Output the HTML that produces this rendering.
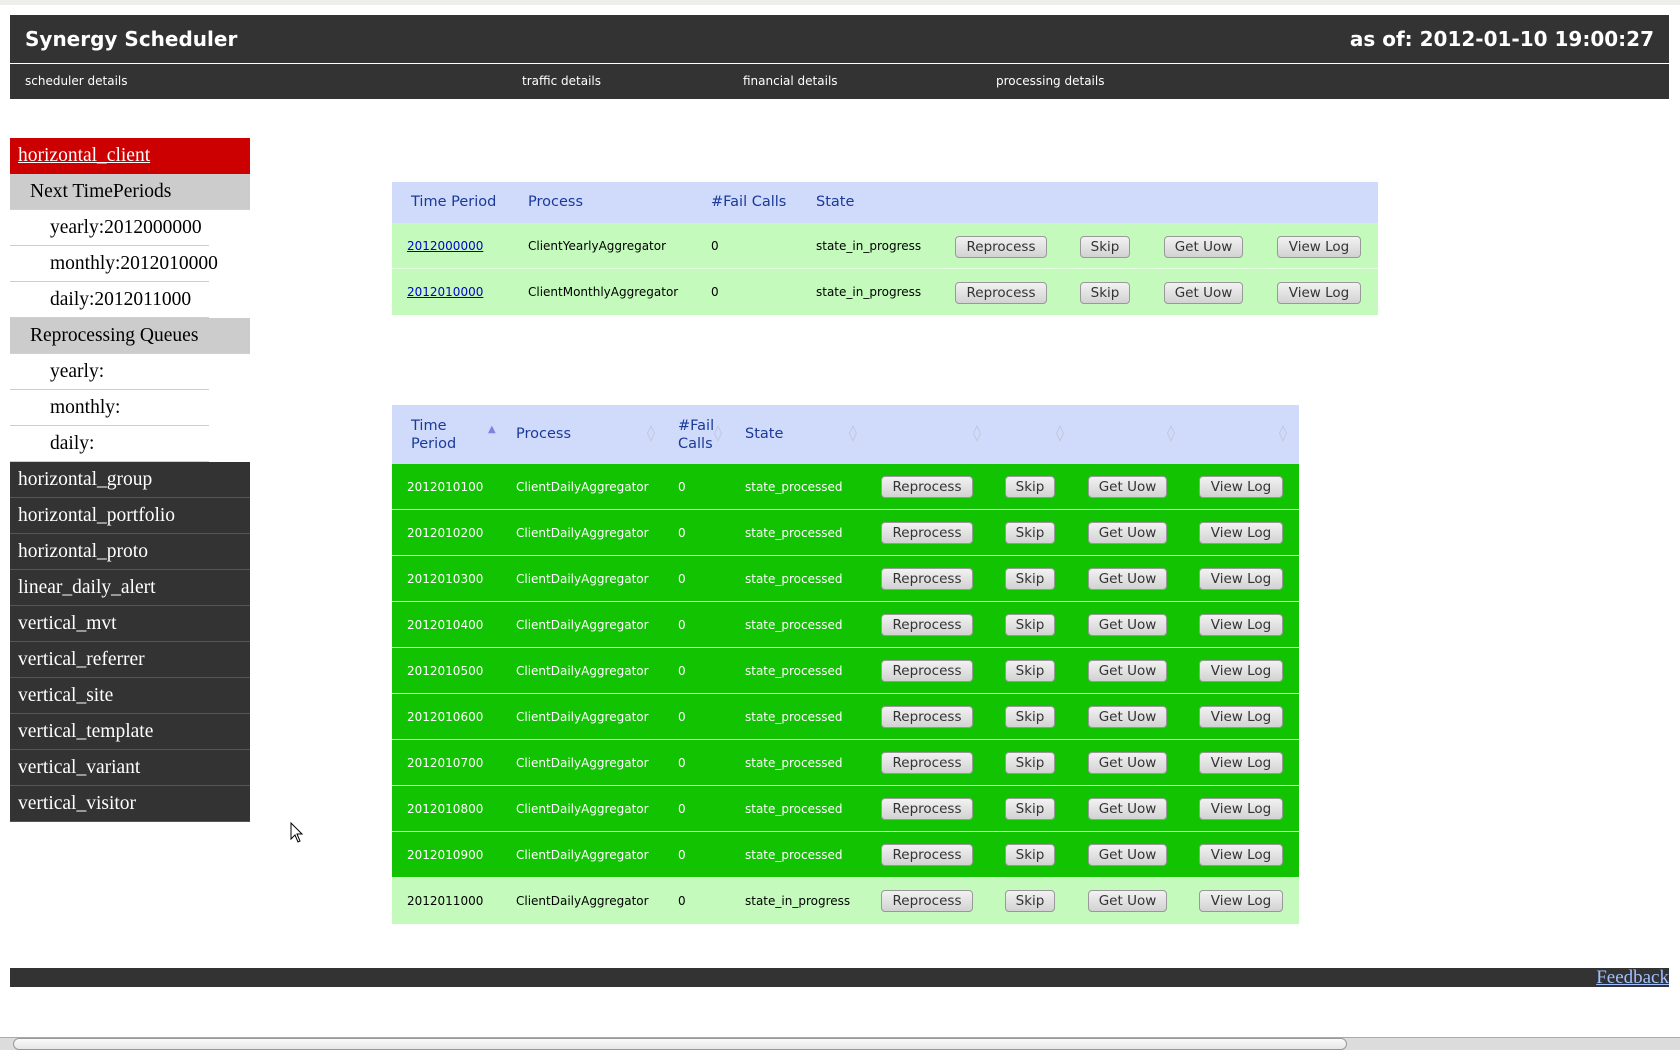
<!DOCTYPE html>
<html><head><meta charset="utf-8"><style>
*{margin:0;padding:0;box-sizing:border-box}
body{width:1680px;height:1050px;overflow:hidden;background:#fff;position:relative;font-family:"DejaVu Sans","Liberation Sans",sans-serif}
.a{position:absolute}
#top{left:0;top:0;width:1680px;height:5px;background:#eeeeea}
#hdr{left:10px;top:15px;width:1659px;height:48px;background:#333;color:#fff;font-weight:bold;font-size:20px}
#nav{left:10px;top:64px;width:1659px;height:35px;background:#333;color:#fff;font-size:12px}
.side{left:10px;width:240px;height:36px;font-family:"Liberation Serif",serif;font-size:19.5px;line-height:35px;white-space:nowrap}
.dk{background:#333;color:#fff;padding-left:8px;border-bottom:1px solid #555}
.gr{background:#ccc;color:#000;padding-left:20px;border-bottom:1px solid #c8d0f0}
.wh{width:199px;background:#fff;color:#000;padding-left:40px;border-bottom:1px solid #c0cdf5;overflow:visible}
.t{font-size:12px;white-space:nowrap}
.h{font-size:14.5px;color:#1a3a9a;white-space:nowrap}
.b{height:22px;border:1px solid #999;border-radius:4px;background:linear-gradient(#f2f2f2,#d2d2d2);font-size:13.5px;color:#333;text-align:center;line-height:20px;font-family:"DejaVu Sans",sans-serif}
.si{color:#bfc6d8;font-size:16px}
</style></head><body>
<div class="a" id="top"></div>
<div class="a" id="hdr"><span class="a" style="left:15px;top:12px">Synergy Scheduler</span><span class="a" style="right:15px;top:12px">as of: 2012-01-10 19:00:27</span></div>
<div class="a" style="left:10px;top:63px;width:1659px;height:1px;background:#fff"></div>
<div class="a" id="nav"><span class="a" style="left:15px;top:10px">scheduler details</span><span class="a" style="left:512px;top:10px">traffic details</span><span class="a" style="left:733px;top:10px">financial details</span><span class="a" style="left:986px;top:10px">processing details</span></div>

<div class="a side" style="top:138px;background:#c00;padding-left:8px"><u style="color:#fff">horizontal_client</u></div>
<div class="a side gr" style="top:174px">Next TimePeriods</div>
<div class="a side wh" style="top:210px">yearly:2012000000</div>
<div class="a side wh" style="top:246px">monthly:2012010000</div>
<div class="a side wh" style="top:282px">daily:2012011000</div>
<div class="a side gr" style="top:318px">Reprocessing Queues</div>
<div class="a side wh" style="top:354px">yearly:</div>
<div class="a side wh" style="top:390px">monthly:</div>
<div class="a side wh" style="top:426px">daily:</div>
<div class="a side dk" style="top:462px">horizontal_group</div>
<div class="a side dk" style="top:498px">horizontal_portfolio</div>
<div class="a side dk" style="top:534px">horizontal_proto</div>
<div class="a side dk" style="top:570px">linear_daily_alert</div>
<div class="a side dk" style="top:606px">vertical_mvt</div>
<div class="a side dk" style="top:642px">vertical_referrer</div>
<div class="a side dk" style="top:678px">vertical_site</div>
<div class="a side dk" style="top:714px">vertical_template</div>
<div class="a side dk" style="top:750px">vertical_variant</div>
<div class="a side dk" style="top:786px">vertical_visitor</div>

<!-- table 1 -->
<div class="a" style="left:392px;top:182px;width:986px;height:41px;background:#d0dafa">
<span class="a h" style="left:19px;top:12px">Time Period</span><span class="a h" style="left:136px;top:12px">Process</span><span class="a h" style="left:319px;top:12px">#Fail Calls</span><span class="a h" style="left:424px;top:12px">State</span></div>
<div class="a" style="left:392px;top:223px;width:986px;height:46px;background:#c4fbbc;border-bottom:1px solid #e4fde0">
<span class="a t" style="left:15px;top:16px;color:#00c;text-decoration:underline">2012000000</span><span class="a t" style="left:136px;top:16px">ClientYearlyAggregator</span><span class="a t" style="left:319px;top:16px">0</span><span class="a t" style="left:424px;top:16px">state_in_progress</span>
<div class="a b" style="left:563px;top:13px;width:92px">Reprocess</div><div class="a b" style="left:688px;top:13px;width:50px">Skip</div><div class="a b" style="left:772px;top:13px;width:79px">Get Uow</div><div class="a b" style="left:885px;top:13px;width:84px">View Log</div></div>
<div class="a" style="left:392px;top:269px;width:986px;height:46px;background:#c4fbbc">
<span class="a t" style="left:15px;top:16px;color:#00c;text-decoration:underline">2012010000</span><span class="a t" style="left:136px;top:16px">ClientMonthlyAggregator</span><span class="a t" style="left:319px;top:16px">0</span><span class="a t" style="left:424px;top:16px">state_in_progress</span>
<div class="a b" style="left:563px;top:13px;width:92px">Reprocess</div><div class="a b" style="left:688px;top:13px;width:50px">Skip</div><div class="a b" style="left:772px;top:13px;width:79px">Get Uow</div><div class="a b" style="left:885px;top:13px;width:84px">View Log</div></div>

<!-- table 2 -->
<div class="a" style="left:392px;top:405px;width:907px;height:59px;background:#d0dafa">
<span class="a h" style="left:19px;top:12px;line-height:18px">Time<br>Period</span><span class="a" style="left:96px;top:19px;color:#8080e0;font-size:10px">▲</span>
<span class="a h" style="left:124px;top:21px">Process</span><span class="a si" style="left:255px;top:18px">◊</span>
<span class="a h" style="left:286px;top:12px;line-height:18px">#Fail<br>Calls</span><span class="a si" style="left:322px;top:18px">◊</span>
<span class="a h" style="left:353px;top:21px">State</span><span class="a si" style="left:457px;top:18px">◊</span>
<span class="a si" style="left:581px;top:18px">◊</span><span class="a si" style="left:664px;top:18px">◊</span><span class="a si" style="left:775px;top:18px">◊</span><span class="a si" style="left:887px;top:18px">◊</span></div>

<div class="a" id="rows" style="left:392px;top:464px;width:907px">
<div style="position:relative;height:46px;background:#11c300;color:#fff;border-bottom:1px solid #e0f5dc"><span class="a t" style="left:15px;top:16px">2012010100</span><span class="a t" style="left:124px;top:16px">ClientDailyAggregator</span><span class="a t" style="left:286px;top:16px">0</span><span class="a t" style="left:353px;top:16px">state_processed</span><div class="a b" style="left:489px;top:12px;width:92px">Reprocess</div><div class="a b" style="left:613px;top:12px;width:50px">Skip</div><div class="a b" style="left:696px;top:12px;width:79px">Get Uow</div><div class="a b" style="left:807px;top:12px;width:84px">View Log</div></div>
<div style="position:relative;height:46px;background:#11c300;color:#fff;border-bottom:1px solid #e0f5dc"><span class="a t" style="left:15px;top:16px">2012010200</span><span class="a t" style="left:124px;top:16px">ClientDailyAggregator</span><span class="a t" style="left:286px;top:16px">0</span><span class="a t" style="left:353px;top:16px">state_processed</span><div class="a b" style="left:489px;top:12px;width:92px">Reprocess</div><div class="a b" style="left:613px;top:12px;width:50px">Skip</div><div class="a b" style="left:696px;top:12px;width:79px">Get Uow</div><div class="a b" style="left:807px;top:12px;width:84px">View Log</div></div>
<div style="position:relative;height:46px;background:#11c300;color:#fff;border-bottom:1px solid #e0f5dc"><span class="a t" style="left:15px;top:16px">2012010300</span><span class="a t" style="left:124px;top:16px">ClientDailyAggregator</span><span class="a t" style="left:286px;top:16px">0</span><span class="a t" style="left:353px;top:16px">state_processed</span><div class="a b" style="left:489px;top:12px;width:92px">Reprocess</div><div class="a b" style="left:613px;top:12px;width:50px">Skip</div><div class="a b" style="left:696px;top:12px;width:79px">Get Uow</div><div class="a b" style="left:807px;top:12px;width:84px">View Log</div></div>
<div style="position:relative;height:46px;background:#11c300;color:#fff;border-bottom:1px solid #e0f5dc"><span class="a t" style="left:15px;top:16px">2012010400</span><span class="a t" style="left:124px;top:16px">ClientDailyAggregator</span><span class="a t" style="left:286px;top:16px">0</span><span class="a t" style="left:353px;top:16px">state_processed</span><div class="a b" style="left:489px;top:12px;width:92px">Reprocess</div><div class="a b" style="left:613px;top:12px;width:50px">Skip</div><div class="a b" style="left:696px;top:12px;width:79px">Get Uow</div><div class="a b" style="left:807px;top:12px;width:84px">View Log</div></div>
<div style="position:relative;height:46px;background:#11c300;color:#fff;border-bottom:1px solid #e0f5dc"><span class="a t" style="left:15px;top:16px">2012010500</span><span class="a t" style="left:124px;top:16px">ClientDailyAggregator</span><span class="a t" style="left:286px;top:16px">0</span><span class="a t" style="left:353px;top:16px">state_processed</span><div class="a b" style="left:489px;top:12px;width:92px">Reprocess</div><div class="a b" style="left:613px;top:12px;width:50px">Skip</div><div class="a b" style="left:696px;top:12px;width:79px">Get Uow</div><div class="a b" style="left:807px;top:12px;width:84px">View Log</div></div>
<div style="position:relative;height:46px;background:#11c300;color:#fff;border-bottom:1px solid #e0f5dc"><span class="a t" style="left:15px;top:16px">2012010600</span><span class="a t" style="left:124px;top:16px">ClientDailyAggregator</span><span class="a t" style="left:286px;top:16px">0</span><span class="a t" style="left:353px;top:16px">state_processed</span><div class="a b" style="left:489px;top:12px;width:92px">Reprocess</div><div class="a b" style="left:613px;top:12px;width:50px">Skip</div><div class="a b" style="left:696px;top:12px;width:79px">Get Uow</div><div class="a b" style="left:807px;top:12px;width:84px">View Log</div></div>
<div style="position:relative;height:46px;background:#11c300;color:#fff;border-bottom:1px solid #e0f5dc"><span class="a t" style="left:15px;top:16px">2012010700</span><span class="a t" style="left:124px;top:16px">ClientDailyAggregator</span><span class="a t" style="left:286px;top:16px">0</span><span class="a t" style="left:353px;top:16px">state_processed</span><div class="a b" style="left:489px;top:12px;width:92px">Reprocess</div><div class="a b" style="left:613px;top:12px;width:50px">Skip</div><div class="a b" style="left:696px;top:12px;width:79px">Get Uow</div><div class="a b" style="left:807px;top:12px;width:84px">View Log</div></div>
<div style="position:relative;height:46px;background:#11c300;color:#fff;border-bottom:1px solid #e0f5dc"><span class="a t" style="left:15px;top:16px">2012010800</span><span class="a t" style="left:124px;top:16px">ClientDailyAggregator</span><span class="a t" style="left:286px;top:16px">0</span><span class="a t" style="left:353px;top:16px">state_processed</span><div class="a b" style="left:489px;top:12px;width:92px">Reprocess</div><div class="a b" style="left:613px;top:12px;width:50px">Skip</div><div class="a b" style="left:696px;top:12px;width:79px">Get Uow</div><div class="a b" style="left:807px;top:12px;width:84px">View Log</div></div>
<div style="position:relative;height:46px;background:#11c300;color:#fff;border-bottom:1px solid #e0f5dc"><span class="a t" style="left:15px;top:16px">2012010900</span><span class="a t" style="left:124px;top:16px">ClientDailyAggregator</span><span class="a t" style="left:286px;top:16px">0</span><span class="a t" style="left:353px;top:16px">state_processed</span><div class="a b" style="left:489px;top:12px;width:92px">Reprocess</div><div class="a b" style="left:613px;top:12px;width:50px">Skip</div><div class="a b" style="left:696px;top:12px;width:79px">Get Uow</div><div class="a b" style="left:807px;top:12px;width:84px">View Log</div></div>
<div style="position:relative;height:46px;background:#c4fbbc;color:#000"><span class="a t" style="left:15px;top:16px">2012011000</span><span class="a t" style="left:124px;top:16px">ClientDailyAggregator</span><span class="a t" style="left:286px;top:16px">0</span><span class="a t" style="left:353px;top:16px">state_in_progress</span><div class="a b" style="left:489px;top:12px;width:92px">Reprocess</div><div class="a b" style="left:613px;top:12px;width:50px">Skip</div><div class="a b" style="left:696px;top:12px;width:79px">Get Uow</div><div class="a b" style="left:807px;top:12px;width:84px">View Log</div></div>
</div>

<svg class="a" style="left:290px;top:822px" width="14" height="22"><path d="M1 1 L1 17 L5 13 L8 20 L10 19 L7 12 L12 12 Z" fill="#fff" stroke="#000" stroke-width="1"/></svg>

<div class="a" style="left:10px;top:968px;width:1659px;height:19px;background:#333"><span class="a" style="right:0;top:-1px;font-family:'Liberation Serif',serif;font-size:19px;color:#a0c0ff;text-decoration:underline">Feedback</span></div>

<div class="a" style="left:0;top:1037px;width:1680px;height:13px;background:#dcdcdc;border-top:1px solid #aaa"></div>
<div class="a" style="left:13px;top:1038px;width:1334px;height:12px;background:linear-gradient(#fafafa,#e6e6e6);border:1px solid #999;border-radius:6px"></div>
</body></html>
